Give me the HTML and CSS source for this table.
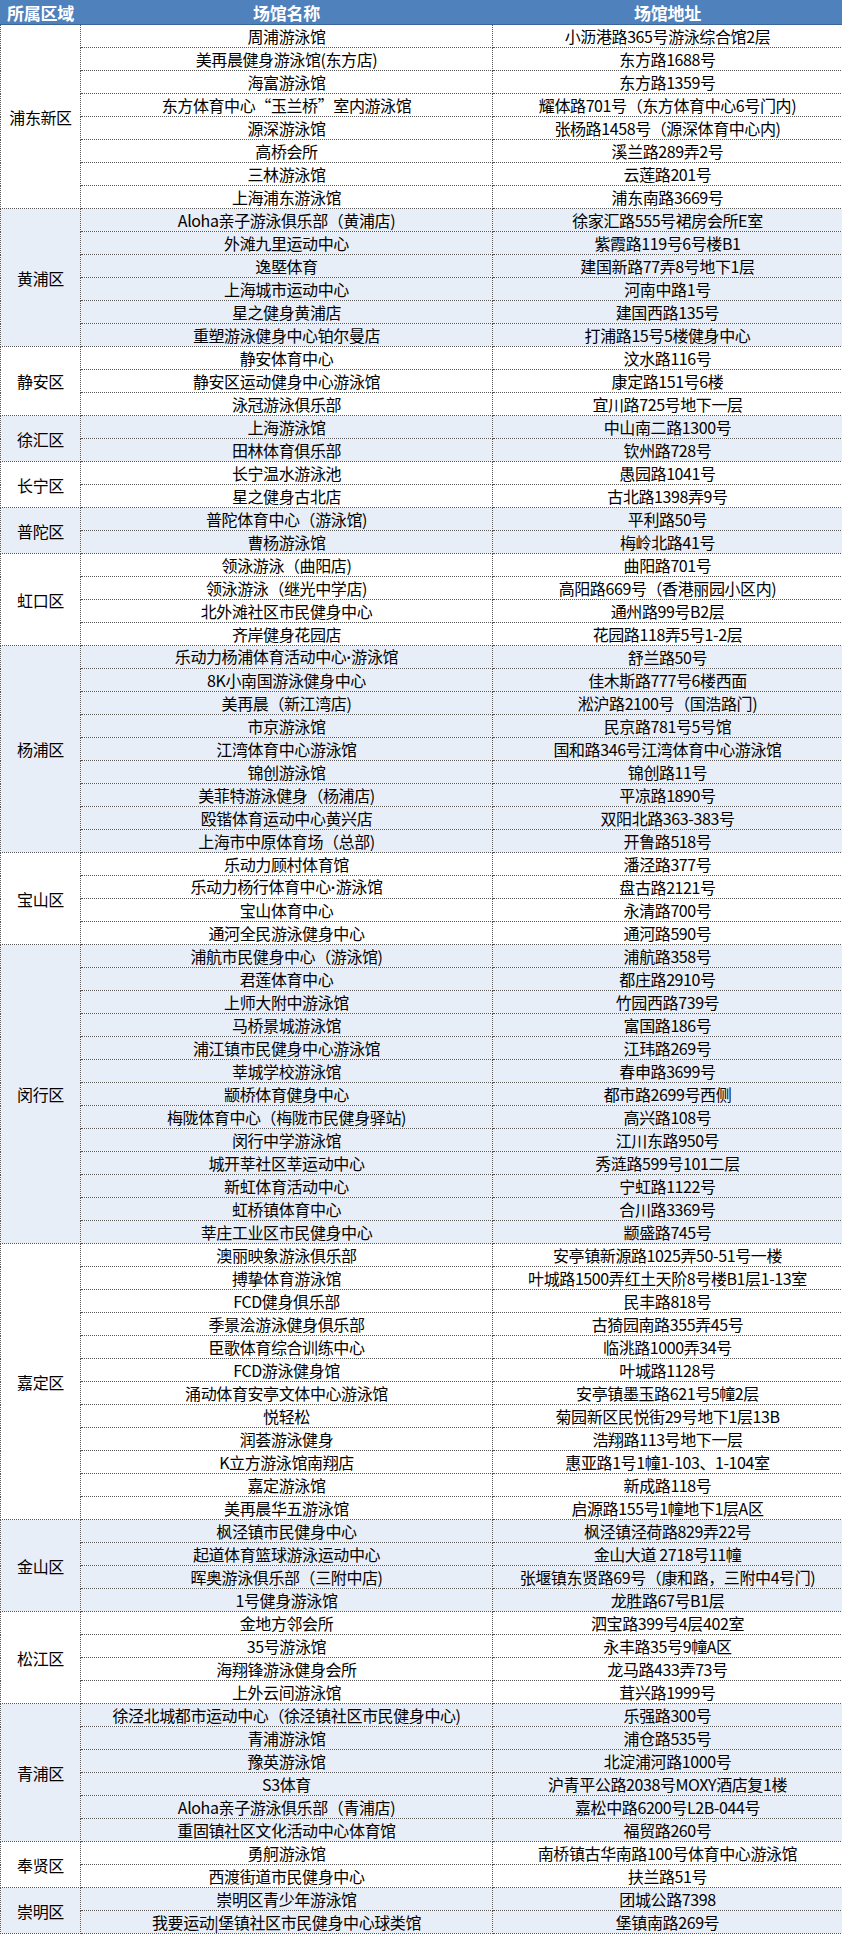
FILE: index.html
```html
<!DOCTYPE html>
<html lang="zh-CN">
<head>
<meta charset="utf-8">
<title>上海游泳馆列表</title>
<link rel="stylesheet" href="styles.css">
</head>
<body>
<table class="venues">
<colgroup><col class="c-area"><col class="c-name"><col class="c-addr"></colgroup>
<thead>
<tr class="head"><th>所属区域</th><th>场馆名称</th><th>场馆地址</th></tr>
</thead>
<tbody class="g">
<tr><td class="area" rowspan="8">浦东新区</td><td>周浦游泳馆</td><td>小沥港路365号游泳综合馆2层</td></tr>
<tr><td>美再晨健身游泳馆(东方店)</td><td>东方路1688号</td></tr>
<tr><td>海富游泳馆</td><td>东方路1359号</td></tr>
<tr><td>东方体育中心“玉兰桥”室内游泳馆</td><td>耀体路701号（东方体育中心6号门内)</td></tr>
<tr><td>源深游泳馆</td><td>张杨路1458号（源深体育中心内)</td></tr>
<tr><td>高桥会所</td><td>溪兰路289弄2号</td></tr>
<tr><td>三林游泳馆</td><td>云莲路201号</td></tr>
<tr><td>上海浦东游泳馆</td><td>浦东南路3669号</td></tr>
</tbody>
<tbody class="g alt">
<tr><td class="area" rowspan="6">黄浦区</td><td>Aloha亲子游泳俱乐部（黄浦店)</td><td>徐家汇路555号裙房会所E室</td></tr>
<tr><td>外滩九里运动中心</td><td>紫霞路119号6号楼B1</td></tr>
<tr><td>逸塈体育</td><td>建国新路77弄8号地下1层</td></tr>
<tr><td>上海城市运动中心</td><td>河南中路1号</td></tr>
<tr><td>星之健身黄浦店</td><td>建国西路135号</td></tr>
<tr><td>重塑游泳健身中心铂尔曼店</td><td>打浦路15号5楼健身中心</td></tr>
</tbody>
<tbody class="g">
<tr><td class="area" rowspan="3">静安区</td><td>静安体育中心</td><td>汶水路116号</td></tr>
<tr><td>静安区运动健身中心游泳馆</td><td>康定路151号6楼</td></tr>
<tr><td>泳冠游泳俱乐部</td><td>宜川路725号地下一层</td></tr>
</tbody>
<tbody class="g alt">
<tr><td class="area" rowspan="2">徐汇区</td><td>上海游泳馆</td><td>中山南二路1300号</td></tr>
<tr><td>田林体育俱乐部</td><td>钦州路728号</td></tr>
</tbody>
<tbody class="g">
<tr><td class="area" rowspan="2">长宁区</td><td>长宁温水游泳池</td><td>愚园路1041号</td></tr>
<tr><td>星之健身古北店</td><td>古北路1398弄9号</td></tr>
</tbody>
<tbody class="g alt">
<tr><td class="area" rowspan="2">普陀区</td><td>普陀体育中心（游泳馆)</td><td>平利路50号</td></tr>
<tr><td>曹杨游泳馆</td><td>梅岭北路41号</td></tr>
</tbody>
<tbody class="g">
<tr><td class="area" rowspan="4">虹口区</td><td>领泳游泳（曲阳店)</td><td>曲阳路701号</td></tr>
<tr><td>领泳游泳（继光中学店)</td><td>高阳路669号（香港丽园小区内)</td></tr>
<tr><td>北外滩社区市民健身中心</td><td>通州路99号B2层</td></tr>
<tr><td>齐岸健身花园店</td><td>花园路118弄5号1-2层</td></tr>
</tbody>
<tbody class="g alt">
<tr><td class="area" rowspan="9">杨浦区</td><td>乐动力杨浦体育活动中心<span class="dot">·</span>游泳馆</td><td>舒兰路50号</td></tr>
<tr><td>8K小南国游泳健身中心</td><td>佳木斯路777号6楼西面</td></tr>
<tr><td>美再晨（新江湾店)</td><td>淞沪路2100号（国浩路门)</td></tr>
<tr><td>市京游泳馆</td><td>民京路781号5号馆</td></tr>
<tr><td>江湾体育中心游泳馆</td><td>国和路346号江湾体育中心游泳馆</td></tr>
<tr><td>锦创游泳馆</td><td>锦创路11号</td></tr>
<tr><td>美菲特游泳健身（杨浦店)</td><td>平凉路1890号</td></tr>
<tr><td>殴锴体育运动中心黄兴店</td><td>双阳北路363-383号</td></tr>
<tr><td>上海市中原体育场（总部)</td><td>开鲁路518号</td></tr>
</tbody>
<tbody class="g">
<tr><td class="area" rowspan="4">宝山区</td><td>乐动力顾村体育馆</td><td>潘泾路377号</td></tr>
<tr><td>乐动力杨行体育中心<span class="dot">·</span>游泳馆</td><td>盘古路2121号</td></tr>
<tr><td>宝山体育中心</td><td>永清路700号</td></tr>
<tr><td>通河全民游泳健身中心</td><td>通河路590号</td></tr>
</tbody>
<tbody class="g alt">
<tr><td class="area" rowspan="13">闵行区</td><td>浦航市民健身中心（游泳馆)</td><td>浦航路358号</td></tr>
<tr><td>君莲体育中心</td><td>都庄路2910号</td></tr>
<tr><td>上师大附中游泳馆</td><td>竹园西路739号</td></tr>
<tr><td>马桥景城游泳馆</td><td>富国路186号</td></tr>
<tr><td>浦江镇市民健身中心游泳馆</td><td>江玮路269号</td></tr>
<tr><td>莘城学校游泳馆</td><td>春申路3699号</td></tr>
<tr><td>颛桥体育健身中心</td><td>都市路2699号西侧</td></tr>
<tr><td>梅陇体育中心（梅陇市民健身驿站)</td><td>高兴路108号</td></tr>
<tr><td>闵行中学游泳馆</td><td>江川东路950号</td></tr>
<tr><td>城开莘社区莘运动中心</td><td>秀涟路599号101二层</td></tr>
<tr><td>新虹体育活动中心</td><td>宁虹路1122号</td></tr>
<tr><td>虹桥镇体育中心</td><td>合川路3369号</td></tr>
<tr><td>莘庄工业区市民健身中心</td><td>颛盛路745号</td></tr>
</tbody>
<tbody class="g">
<tr><td class="area" rowspan="12">嘉定区</td><td>澳丽映象游泳俱乐部</td><td>安亭镇新源路1025弄50-51号一楼</td></tr>
<tr><td>搏挚体育游泳馆</td><td>叶城路1500弄红土天阶8号楼B1层1-13室</td></tr>
<tr><td>FCD健身俱乐部</td><td>民丰路818号</td></tr>
<tr><td>季景浍游泳健身俱乐部</td><td>古猗园南路355弄45号</td></tr>
<tr><td>臣歌体育综合训练中心</td><td>临洮路1000弄34号</td></tr>
<tr><td>FCD游泳健身馆</td><td>叶城路1128号</td></tr>
<tr><td>涌动体育安亭文体中心游泳馆</td><td>安亭镇墨玉路621号5幢2层</td></tr>
<tr><td>悦轻松</td><td>菊园新区民悦街29号地下1层13B</td></tr>
<tr><td>润荟游泳健身</td><td>浩翔路113号地下一层</td></tr>
<tr><td>K立方游泳馆南翔店</td><td>惠亚路1号1幢1-103、1-104室</td></tr>
<tr><td>嘉定游泳馆</td><td>新成路118号</td></tr>
<tr><td>美再晨华五游泳馆</td><td>启源路155号1幢地下1层A区</td></tr>
</tbody>
<tbody class="g alt">
<tr><td class="area" rowspan="4">金山区</td><td>枫泾镇市民健身中心</td><td>枫泾镇泾荷路829弄22号</td></tr>
<tr><td>起道体育篮球游泳运动中心</td><td>金山大道 2718号11幢</td></tr>
<tr><td>晖奥游泳俱乐部（三附中店)</td><td>张堰镇东贤路69号（康和路，三附中4号门)</td></tr>
<tr><td>1号健身游泳馆</td><td>龙胜路67号B1层</td></tr>
</tbody>
<tbody class="g">
<tr><td class="area" rowspan="4">松江区</td><td>金地方邻会所</td><td>泗宝路399号4层402室</td></tr>
<tr><td>35号游泳馆</td><td>永丰路35号9幢A区</td></tr>
<tr><td>海翔锋游泳健身会所</td><td>龙马路433弄73号</td></tr>
<tr><td>上外云间游泳馆</td><td>茸兴路1999号</td></tr>
</tbody>
<tbody class="g alt">
<tr><td class="area" rowspan="6">青浦区</td><td>徐泾北城都市运动中心（徐泾镇社区市民健身中心)</td><td>乐强路300号</td></tr>
<tr><td>青浦游泳馆</td><td>浦仓路535号</td></tr>
<tr><td>豫英游泳馆</td><td>北淀浦河路1000号</td></tr>
<tr><td>S3体育</td><td>沪青平公路2038号MOXY酒店复1楼</td></tr>
<tr><td>Aloha亲子游泳俱乐部（青浦店)</td><td>嘉松中路6200号L2B-044号</td></tr>
<tr><td>重固镇社区文化活动中心体育馆</td><td>福贸路260号</td></tr>
</tbody>
<tbody class="g">
<tr><td class="area" rowspan="2">奉贤区</td><td>勇舸游泳馆</td><td>南桥镇古华南路100号体育中心游泳馆</td></tr>
<tr><td>西渡街道市民健身中心</td><td>扶兰路51号</td></tr>
</tbody>
<tbody class="g alt">
<tr><td class="area" rowspan="2">崇明区</td><td>崇明区青少年游泳馆</td><td>团城公路7398</td></tr>
<tr><td>我要运动|堡镇社区市民健身中心球类馆</td><td>堡镇南路269号</td></tr>
</tbody>
</table>
</body>
</html>
```

FILE: styles.css
```css
html, body {
  margin: 0;
  padding: 0;
  background: #ffffff;
}

.venues {
  width: 842px;
  border-collapse: collapse;
  table-layout: fixed;
  font-family: "Noto Sans CJK SC", "Noto Sans", sans-serif;
  font-size: 16px;
  color: #000000;
}

.c-area { width: 80px; }
.c-name { width: 412px; }
.c-addr { width: 350px; }

.venues th,
.venues td {
  padding: 0;
  text-align: center;
  vertical-align: middle;
  white-space: nowrap;
  overflow: hidden;
  border: 1px dotted #555555;
  letter-spacing: -0.4px;
  line-height: 16px;
}

.head th {
  height: 23px;
  background: #4f81bd;
  color: #ffffff;
  font-weight: bold;
  font-size: 17px;
  line-height: 17px;
  letter-spacing: -0.3px;
  border: 1px solid #4f81bd;
  border-bottom: 1px solid #3a669c;
}

.venues tbody tr {
  height: 23px;
}

.venues tbody td {
  height: 22px;
}

.venues tbody.g {
  border-top: 1px dotted #111111;
}

.venues tbody.alt td {
  background: #e8eef7;
}

.dot {
  font-family: "Liberation Sans", sans-serif;
  font-weight: bold;
}
```
